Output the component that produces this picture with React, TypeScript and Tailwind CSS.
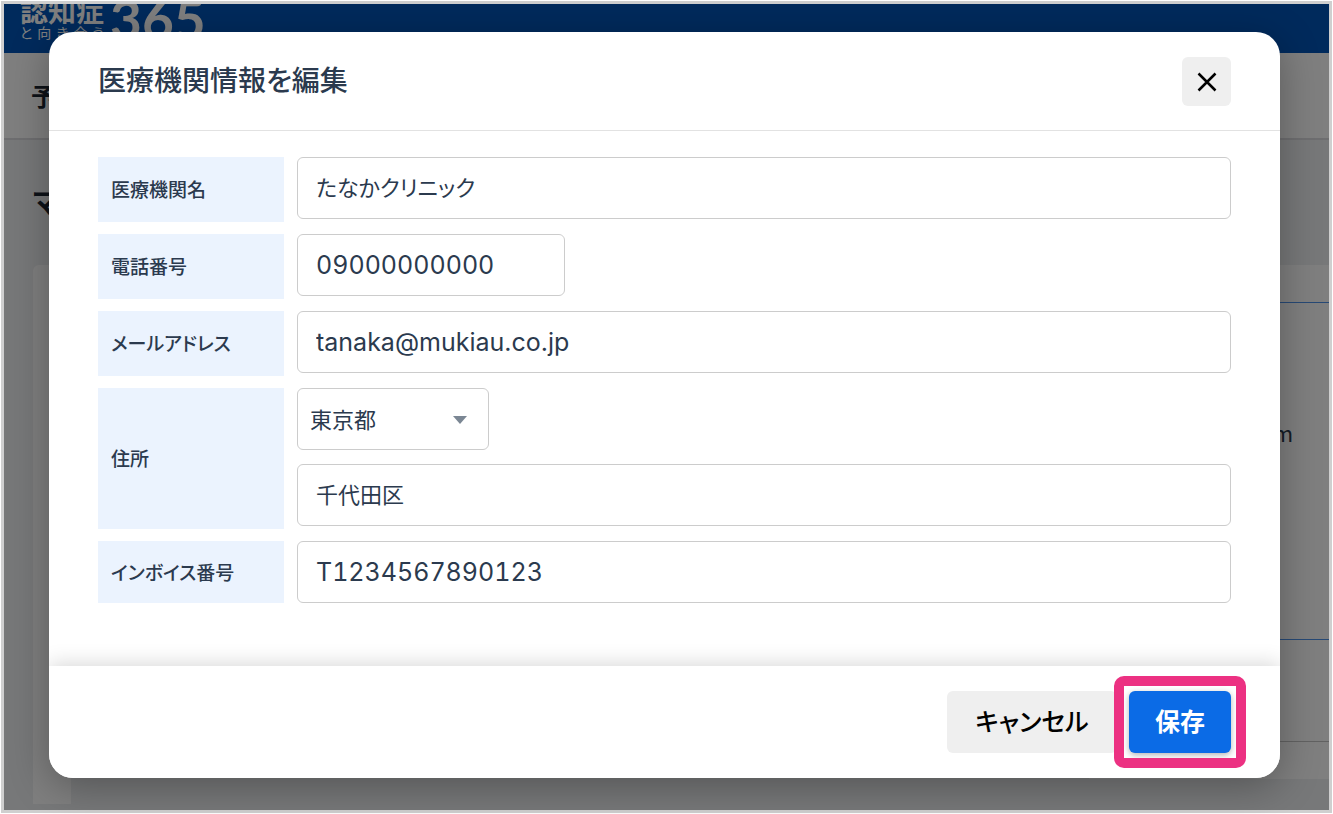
import { useState } from 'react';
import type { ReactNode } from 'react';

const inputClass =
  'block h-[62px] rounded-md border border-[#cccccc] bg-white px-[18px] text-[#2b3a4e] outline-none focus:border-[#0b6be6]';

type FormRowProps = {
  id: string;
  label: string;
  last?: boolean;
  children: ReactNode;
};

const FormRow = ({ id, label, last = false, children }: FormRowProps) => (
  <div className="flex gap-[13px]">
    <label
      htmlFor={id}
      className="flex w-[186px] shrink-0 items-center bg-[#ebf3fe] px-[13px] text-[19px] font-medium"
    >
      {label}
    </label>
    <div className={last ? 'min-w-0 flex-1' : 'min-w-0 flex-1 pb-[3px]'}>{children}</div>
  </div>
);

// Page behind the dialog
const PageBackdrop = () => (
  <div className="flex min-h-full flex-col bg-[#eef0f3]">
    <header className="flex h-[49px] items-end gap-[6px] overflow-hidden bg-[#0055b8] pl-4 text-white">
      <div className="flex flex-col pb-[13px]">
        <span className="text-[28px] leading-7 font-bold">認知症</span>
        <span className="flex justify-between text-sm leading-4">
          <span>と</span>
          <span>向</span>
          <span>き</span>
          <span>合</span>
          <span>う</span>
        </span>
      </div>
      <span className="pb-2 font-['Lato'] text-[55px] leading-[52px] font-bold">365</span>
    </header>
    <nav className="flex h-[87px] items-center border-b-2 border-[#dcdde0] bg-white pl-[27px] text-[25px] font-bold text-[#1b2530]">
      予
    </nav>
    <h1 className="flex h-[125px] items-center pb-1 pl-[29px] text-[28px] font-bold text-[#1b2530]">マ</h1>
    <div className="flex items-start justify-between pb-1 pl-[29px]">
      <div className="h-[539px] w-[38px] rounded-tl-md bg-white" />
      <div className="flex w-[240px] flex-col bg-white text-right text-[22px] text-[#2b3a4e]">
        <div className="h-[37px]" />
        <div className="flex h-[338px] items-start justify-end border-y border-[#4f93ea] pt-[113px] pr-9">
          m
        </div>
        <div className="h-[102px] border-b border-[#c4c4c4]" />
        <div className="h-[37px]" />
      </div>
    </div>
  </div>
);

const App = () => {
  const [form, setForm] = useState({
    name: 'たなかクリニック',
    tel: '09000000000',
    email: 'tanaka@mukiau.co.jp',
    prefecture: '東京都',
    city: '千代田区',
    invoice: 'T1234567890123',
  });

  const update = (key: keyof typeof form, value: string) => {
    setForm((prev) => ({ ...prev, [key]: value }));
  };

  return (
    <div
      lang="ja"
      className="relative h-screen overflow-hidden bg-white p-px font-['Noto_Sans_CJK_JP',sans-serif] text-[#2b3a4e] [font-feature-settings:'palt']"
    >
      <div className="h-full overflow-hidden border-3 border-[#cfcfcf]">
        <PageBackdrop />
      </div>

      <div className="absolute inset-1 bg-black/50 pt-7 pr-[49px] pl-[45px]">
        <div
          role="dialog"
          aria-modal="true"
          aria-labelledby="dialog-title"
          className="overflow-hidden rounded-3xl bg-white shadow-[0_8px_40px_rgba(0,0,0,0.3)]"
        >
          <div className="flex items-start justify-between border-b border-[#e2e2e2] px-[49px] pt-[25px] pb-6">
            <h2 id="dialog-title" className="text-[28px] leading-[45px] font-medium">
              医療機関情報を編集
            </h2>
            <button
              type="button"
              aria-label="閉じる"
              className="flex h-[49px] w-[49px] items-center justify-center rounded-md bg-[#efefef] text-black"
            >
              <svg width="20" height="20" viewBox="0 0 20 20" fill="none" stroke="currentColor" strokeWidth="2.5">
                <path d="M1.5 1.5 18.5 18.5M18.5 1.5 1.5 18.5" />
              </svg>
            </button>
          </div>

          <form className="flex flex-col gap-3 px-[49px] pt-[26px] pb-[63px]">
            <FormRow id="name" label="医療機関名">
              <input
                id="name"
                type="text"
                value={form.name}
                onChange={(e) => update('name', e.target.value)}
                className={`${inputClass} w-full pb-1 text-[22px]`}
              />
            </FormRow>
            <FormRow id="tel" label="電話番号">
              <input
                id="tel"
                type="tel"
                value={form.tel}
                onChange={(e) => update('tel', e.target.value)}
                className={`${inputClass} w-[268px] font-['Inter'] text-[25px] tabular-nums`}
              />
            </FormRow>
            <FormRow id="email" label="メールアドレス">
              <input
                id="email"
                type="email"
                value={form.email}
                onChange={(e) => update('email', e.target.value)}
                className={`${inputClass} w-full font-['Inter'] text-[25px]`}
              />
            </FormRow>
            <FormRow id="city" label="住所">
              <div className="flex flex-col gap-[14px]">
                <div className="relative w-[192px]">
                  <select
                    aria-label="都道府県"
                    value={form.prefecture}
                    onChange={(e) => update('prefecture', e.target.value)}
                    className="block h-[62px] w-full appearance-none rounded-md border border-[#cccccc] bg-white pr-10 pb-[2px] pl-3 text-[22px] text-[#2b3a4e] outline-none"
                  >
                    <option>東京都</option>
                  </select>
                  <svg
                    className="pointer-events-none absolute top-7 right-[22px]"
                    width="14"
                    height="8"
                    viewBox="0 0 14 8"
                    fill="#7b8794"
                  >
                    <path d="M0 0h14L7 8z" />
                  </svg>
                </div>
                <input
                  id="city"
                  type="text"
                  value={form.city}
                  onChange={(e) => update('city', e.target.value)}
                  className={`${inputClass} w-full pb-1 text-[22px]`}
                />
              </div>
            </FormRow>
            <FormRow id="invoice" label="インボイス番号" last>
              <input
                id="invoice"
                type="text"
                value={form.invoice}
                onChange={(e) => update('invoice', e.target.value)}
                className={`${inputClass} w-full font-['Inter'] text-[25px] tabular-nums`}
              />
            </FormRow>
          </form>

          <div className="flex justify-end gap-3 bg-white px-[49px] py-[25px] text-[25px] shadow-[0_-2px_20px_rgba(0,0,0,0.16)]">
            <button type="button" className="h-[62px] w-[170px] rounded-md bg-[#efefef] pb-[2px] font-medium text-black">
              キャンセル
            </button>
            <div className="relative">
              <button
                type="submit"
                className="h-[62px] w-[102px] rounded-md bg-[#0b6be6] pb-[2px] font-bold text-white shadow-[0_2px_6px_rgba(0,0,0,0.3)]"
              >
                保存
              </button>
              {/* Highlight around the save button */}
              <span className="pointer-events-none absolute -inset-[15px] rounded-[10px] border-10 border-[#ec3182]" />
            </div>
          </div>
        </div>
      </div>
    </div>
  );
};

export default App;
